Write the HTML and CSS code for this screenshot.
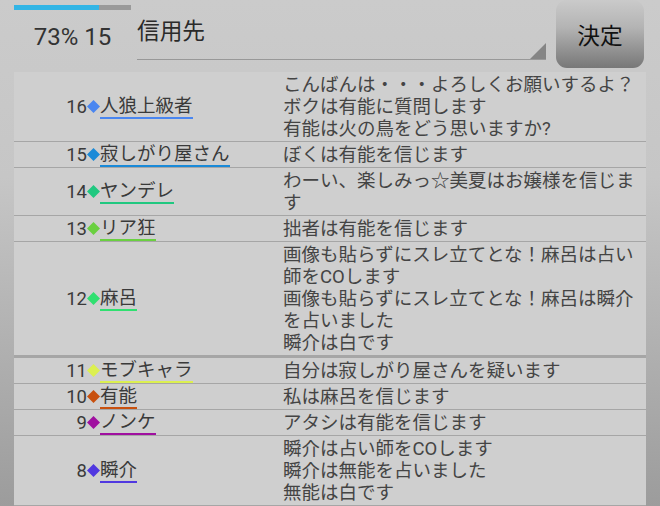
FILE: index.html
```html
<!DOCTYPE html>
<html lang="ja">
<head>
<meta charset="utf-8">
<link rel="stylesheet" href="styles.css">
</head>
<body>
<div class="screen">
  <header class="top">
    <div class="status">
      <div class="progress"><div class="progress-fill" style="width:73%"></div></div>
      <div class="count">73% 15</div>
    </div>
    <div class="spinner">
      <span class="spinner-text">信用先</span>
      <span class="spinner-arrow"></span>
    </div>
    <button class="decide">決定</button>
  </header>

  <div class="list">
    <div class="row">
      <div class="who"><span class="num">16</span><svg class="dia" viewBox="0 0 13 13"><polygon points="6.5,0 13,6.5 6.5,13 0,6.5" fill="#4a86f0"/></svg><span class="name" style="border-color:#4a86f0">人狼上級者</span></div>
      <div class="msg">こんばんは・・・よろしくお願いするよ？<br>ボクは有能に質問します<br>有能は火の鳥をどう思いますか?</div>
    </div>
    <div class="row">
      <div class="who"><span class="num">15</span><svg class="dia" viewBox="0 0 13 13"><polygon points="6.5,0 13,6.5 6.5,13 0,6.5" fill="#1a8ad8"/></svg><span class="name" style="border-color:#1a8ad8">寂しがり屋さん</span></div>
      <div class="msg">ぼくは有能を信じます</div>
    </div>
    <div class="row">
      <div class="who"><span class="num">14</span><svg class="dia" viewBox="0 0 13 13"><polygon points="6.5,0 13,6.5 6.5,13 0,6.5" fill="#20c880"/></svg><span class="name" style="border-color:#20c880">ヤンデレ</span></div>
      <div class="msg">わーい、楽しみっ☆美夏はお嬢様を信じます</div>
    </div>
    <div class="row">
      <div class="who"><span class="num">13</span><svg class="dia" viewBox="0 0 13 13"><polygon points="6.5,0 13,6.5 6.5,13 0,6.5" fill="#6ad040"/></svg><span class="name" style="border-color:#6ad040">リア狂</span></div>
      <div class="msg">拙者は有能を信じます</div>
    </div>
    <div class="row row-thick">
      <div class="who"><span class="num">12</span><svg class="dia" viewBox="0 0 13 13"><polygon points="6.5,0 13,6.5 6.5,13 0,6.5" fill="#30e070"/></svg><span class="name" style="border-color:#30e070">麻呂</span></div>
      <div class="msg">画像も貼らずにスレ立てとな！麻呂は占い師をCOします<br>画像も貼らずにスレ立てとな！麻呂は瞬介を占いました<br>瞬介は白です</div>
    </div>
    <div class="row">
      <div class="who"><span class="num">11</span><svg class="dia" viewBox="0 0 13 13"><polygon points="6.5,0 13,6.5 6.5,13 0,6.5" fill="#dcf050"/></svg><span class="name" style="border-color:#dcf050">モブキャラ</span></div>
      <div class="msg">自分は寂しがり屋さんを疑います</div>
    </div>
    <div class="row">
      <div class="who"><span class="num">10</span><svg class="dia" viewBox="0 0 13 13"><polygon points="6.5,0 13,6.5 6.5,13 0,6.5" fill="#c8500e"/></svg><span class="name" style="border-color:#c8500e">有能</span></div>
      <div class="msg">私は麻呂を信じます</div>
    </div>
    <div class="row">
      <div class="who"><span class="num">9</span><svg class="dia" viewBox="0 0 13 13"><polygon points="6.5,0 13,6.5 6.5,13 0,6.5" fill="#a010a0"/></svg><span class="name" style="border-color:#a010a0">ノンケ</span></div>
      <div class="msg">アタシは有能を信じます</div>
    </div>
    <div class="row">
      <div class="who"><span class="num">8</span><svg class="dia" viewBox="0 0 13 13"><polygon points="6.5,0 13,6.5 6.5,13 0,6.5" fill="#5038e0"/></svg><span class="name" style="border-color:#5038e0">瞬介</span></div>
      <div class="msg">瞬介は占い師をCOします<br>瞬介は無能を占いました<br>無能は白です</div>
    </div>
  </div>
</div>
</body>
</html>
```

FILE: styles.css
```css
html, body {
  margin: 0;
  padding: 0;
}
body {
  width: 660px;
  height: 506px;
  overflow: hidden;
  font-family: "Roboto", "Noto Sans CJK JP", sans-serif;
  background: linear-gradient(to bottom, #cbcbcb 0%, #c6c6c6 35%, #9c9c9c 100%);
}
.screen {
  width: 660px;
  height: 506px;
  display: flex;
  flex-direction: column;
}
.top {
  height: 72px;
  display: flex;
  align-items: flex-start;
  flex-shrink: 0;
}
.status {
  margin-left: 14px;
  width: 117px;
  padding-top: 5px;
  display: flex;
  flex-direction: column;
  align-items: center;
}
.progress {
  width: 117px;
  height: 5px;
  background: #9a9a9a;
}
.progress-fill {
  height: 100%;
  background: #33b5e5;
}
.count {
  margin-top: 13px;
  font-size: 24px;
  line-height: 28px;
  color: #333;
}
.spinner {
  margin-left: 6px;
  width: 409px;
  height: 60px;
  border-bottom: 1px solid #989898;
  position: relative;
  box-sizing: border-box;
  padding-top: 18px;
}
.spinner-text {
  font-size: 22.7px;
  line-height: 28px;
  color: #2a2a2a;
}
.spinner-arrow {
  position: absolute;
  right: 0;
  bottom: 0;
  width: 0;
  height: 0;
  border-style: solid;
  border-width: 0 0 16px 16px;
  border-color: transparent transparent #858585 transparent;
}
.decide {
  margin-left: 10px;
  width: 88px;
  height: 68px;
  border: none;
  border-radius: 11px;
  background: linear-gradient(to bottom, #cacaca 0%, #b4b4b4 40%, #777 100%);
  font-family: "Noto Sans CJK JP", sans-serif;
  font-size: 22.7px;
  color: #111;
  padding: 0;
}
.list {
  margin-left: 14px;
  width: 632px;
  flex: 1;
  background: #cfcfcf;
}
.row {
  display: grid;
  grid-template-columns: 269px 1fr;
  border-bottom: 1px solid #a6a6a6;
}
.row-thick {
  border-bottom-width: 3px;
}
.who {
  display: flex;
  align-items: center;
  font-size: 18.5px;
  color: #3a3a3a;
}
.num {
  width: 73px;
  text-align: right;
  line-height: 20px;
}
.dia {
  width: 13px;
  height: 13px;
  flex-shrink: 0;
}
.name {
  line-height: 19px;
  border-bottom: 2px solid;
  padding-bottom: 1px;
  margin-top: 2px;
}
.msg {
  font-size: 18.5px;
  line-height: 22px;
  padding: 1.5px 4px 1.5px 0;
  color: #444;
}
```
